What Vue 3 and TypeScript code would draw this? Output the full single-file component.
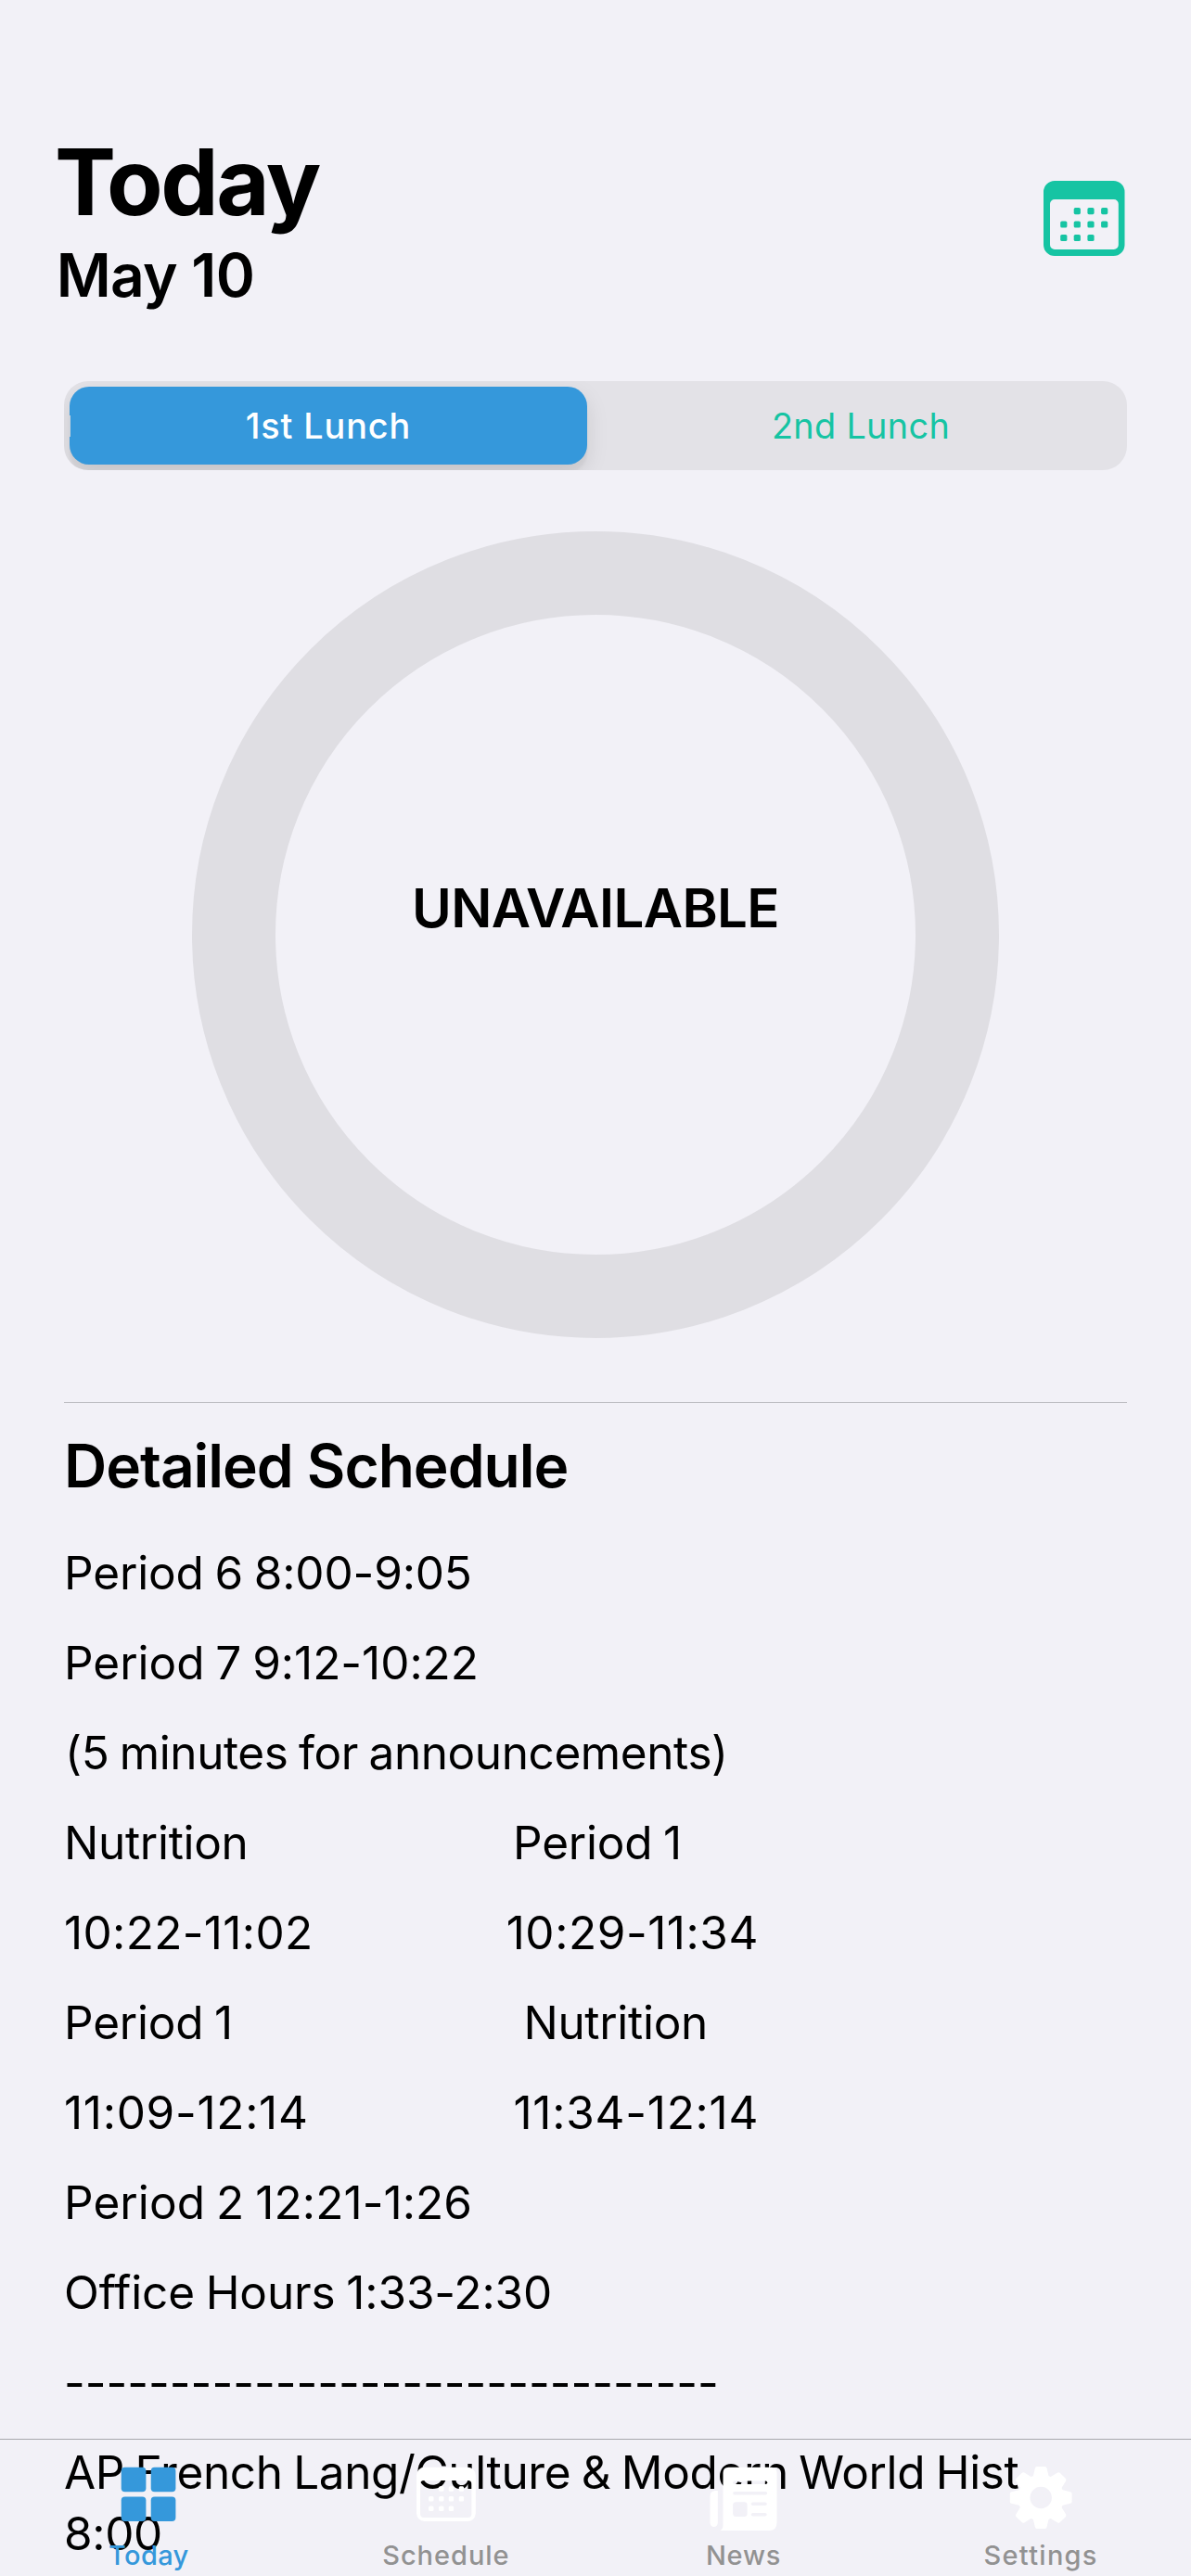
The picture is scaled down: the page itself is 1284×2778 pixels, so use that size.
<script setup lang="ts">
import { ref } from 'vue'

interface Cell {
  text: string
  spacing: number
  indent?: number
}

const lunches = ['1st Lunch', '2nd Lunch']
const selected = ref(0)

const schedule: Cell[][] = [
  [{ text: 'Period 6 8:00-9:05', spacing: -0.15 }],
  [{ text: 'Period 7 9:12-10:22', spacing: -0.03 }],
  [{ text: '(5 minutes for announcements)', spacing: -0.41, indent: 1 }],
  [{ text: 'Nutrition', spacing: -0.3 }, { text: 'Period 1', spacing: -0.22, indent: 8 }],
  [{ text: '10:22-11:02', spacing: 0.35 }, { text: '10:29-11:34', spacing: 0.54, indent: 0.7 }],
  [{ text: 'Period 1', spacing: -0.22 }, { text: 'Nutrition', spacing: -0.3, indent: 19.4 }],
  [{ text: '11:09-12:14', spacing: 0.7 }, { text: '11:34-12:14', spacing: 0.74, indent: 8.5 }],
  [{ text: 'Period 2 12:21-1:26', spacing: 0.08 }],
  [{ text: 'Office Hours 1:33-2:30', spacing: -0.13 }],
  [{ text: '-'.repeat(31), spacing: 0 }],
  [{ text: 'AP French Lang/Culture & Modern World Hist 8:00', spacing: -0.37 }],
]

const teeth = [0, 45, 90, 135, 180, 225, 270, 315]
const headerDots = [
  [36.3, 32.7], [51, 32.7], [65.7, 32.7],
  [21.8, 47], [36.3, 47], [51, 47], [65.7, 47],
  [21.8, 61.5], [36.3, 61.5], [51, 61.5],
]
const tabDots = [
  [34.8, 25], [45.4, 25], [56.4, 25],
  [23.8, 35.7], [34.8, 35.7], [45.4, 35.7], [56.4, 35.7],
  [23.8, 46.3], [34.8, 46.3], [45.4, 46.3],
]
</script>

<template>
  <div class="screen">
    <header class="header">
      <div>
        <h1 class="title">Today</h1>
        <p class="date">May 10</p>
      </div>
      <svg class="calendar" width="88" height="82" viewBox="0 0 88 82">
        <path
          fill-rule="evenodd"
          d="M12 0H75.5A12 12 0 0 1 87.5 12V69A12 12 0 0 1 75.5 81H12A12 12 0 0 1 0 69V12A12 12 0 0 1 12 0ZM12 20A5 5 0 0 0 7 25V69A5 5 0 0 0 12 74H75.8A5 5 0 0 0 80.8 69V25A5 5 0 0 0 75.8 20Z"
        />
        <rect v-for="([x, y], i) in headerDots" :key="i" :x="x - 3.6" :y="y - 3.6" width="7.2" height="7.2" rx="1.7" />
      </svg>
    </header>

    <div class="segmented">
      <button
        v-for="(name, i) in lunches"
        :key="name"
        class="segment"
        :class="{ active: selected === i }"
        @click="selected = i"
      >
        {{ name }}
      </button>
    </div>

    <div class="ring"><span>UNAVAILABLE</span></div>

    <section class="details">
      <h2>Detailed Schedule</h2>
      <div v-for="(row, r) in schedule" :key="r" class="row">
        <span
          v-for="(cell, c) in row"
          :key="c"
          :class="{ half: row.length > 1 }"
          :style="{ letterSpacing: cell.spacing + 'px', paddingLeft: (cell.indent ?? 0) + 'px' }"
        >{{ cell.text }}</span>
      </div>
    </section>

    <nav class="tabs">
      <a class="tab current">
        <svg viewBox="0 0 80 72">
          <rect x="10.7" y="1.8" width="26.7" height="26.4" rx="4" />
          <rect x="42.7" y="1.8" width="26.7" height="26.4" rx="4" />
          <rect x="10.7" y="33.4" width="26.7" height="26.6" rx="4" />
          <rect x="42.7" y="33.4" width="26.7" height="26.6" rx="4" />
        </svg>
        <span class="label today">Today</span>
      </a>
      <a class="tab">
        <svg viewBox="0 0 80 72">
          <path
            fill-rule="evenodd"
            d="M16.6 1.7H63.3A8.5 8.5 0 0 1 71.8 10.2V51.5A8.5 8.5 0 0 1 63.3 60H16.6A8.5 8.5 0 0 1 8.1 51.5V10.2A8.5 8.5 0 0 1 16.6 1.7ZM16.1 16A4 4 0 0 0 12.1 20V52A4 4 0 0 0 16.1 56H63.4A4 4 0 0 0 67.4 52V20A4 4 0 0 0 63.4 16Z"
          />
          <rect v-for="([x, y], i) in tabDots" :key="i" :x="x - 2.7" :y="y - 2.7" width="5.4" height="5.4" rx="1.5" />
        </svg>
        <span class="label">Schedule</span>
      </a>
      <a class="tab">
        <svg viewBox="0 0 80 72">
          <mask id="news-cut">
            <rect width="80" height="72" fill="#fff" />
            <g fill="#000">
              <rect x="28.2" y="16.6" width="37" height="3.4" rx="1.7" />
              <rect x="28.2" y="28" width="37" height="3.4" rx="1.7" />
              <rect x="28.2" y="39.3" width="15.4" height="15.7" rx="3.2" />
              <rect x="47.8" y="39.5" width="16.9" height="3.4" rx="1.7" />
              <rect x="47.8" y="51" width="16.9" height="3.4" rx="1.7" />
            </g>
          </mask>
          <path
            mask="url(#news-cut)"
            d="M23.5 1.7H69.5Q75.5 1.7 75.5 7.7V61.5Q75.5 70 67 70H14.5Q17.5 68.5 17.5 63.5V7.7Q17.5 1.7 23.5 1.7Z"
          />
          <path d="M11.8 27V61.8A4.15 4.15 0 0 1 3.5 61.8V33Q3.5 27 9.5 27Z" />
        </svg>
        <span class="label news">News</span>
      </a>
      <a class="tab">
        <svg viewBox="0 0 80 72">
          <mask id="gear-cut">
            <rect width="80" height="72" fill="#fff" />
            <circle cx="40.2" cy="34.5" r="11.7" fill="#000" />
          </mask>
          <g mask="url(#gear-cut)">
            <circle cx="40.2" cy="34.5" r="24.8" />
            <path
              v-for="angle in teeth"
              :key="angle"
              d="M-6.6-21L-4.2-31.2H4.2L6.6-21Z"
              stroke-width="4.4"
              stroke-linejoin="round"
              :transform="`translate(40.2 34.5) rotate(${angle})`"
            />
          </g>
        </svg>
        <span class="label settings">Settings</span>
      </a>
    </nav>
  </div>
</template>

<style>
body {
  background: #f2f1f7;
}
</style>

<style scoped>
.screen {
  position: relative;
  box-sizing: border-box;
  width: 1284px;
  height: 2778px;
  padding: 136px 69px 0;
  overflow: hidden;
  background: #f2f1f7;
  color: #000;
  font-family: Inter, 'Liberation Sans', sans-serif;
}

h1,
h2,
p {
  margin: 0;
}

.header {
  display: flex;
  justify-content: space-between;
  height: 275px;
  margin: 0 2px 0 -10px;
}

.title {
  font-size: 99px;
  line-height: 120px;
  font-weight: 700;
  letter-spacing: -2.4px;
}

.date {
  padding-left: 1.7px;
  font-size: 64px;
  line-height: 81px;
  font-weight: 600;
  letter-spacing: -0.71px;
}

.calendar {
  margin-top: 59px;
  fill: #16c4a3;
}

.segmented {
  display: flex;
  justify-content: space-between;
  box-sizing: border-box;
  height: 96px;
  padding: 6px 2px 6px 6px;
  overflow: hidden;
  border-radius: 26px;
  background: #e3e2e7;
}

.segment {
  position: relative;
  width: 570px;
  padding: 0;
  border: 0;
  border-radius: 21px;
  background: none;
  color: #16c4a3;
  font: 400 37.8px/84px Inter, 'Liberation Sans', sans-serif;
  letter-spacing: 0.34px;
}

.segment.active {
  width: 558px;
  background: #3598db;
  box-shadow: 0 9px 24px rgba(0, 0, 0, 0.1), 0 9px 3px rgba(0, 0, 0, 0.04);
  color: #fff;
  font-weight: 500;
  letter-spacing: 0.89px;
}

.segment.active::before {
  position: absolute;
  top: 31px;
  left: 0;
  width: 1px;
  height: 23px;
  background: #c9d3de;
  content: '';
}

.ring {
  display: flex;
  align-items: center;
  justify-content: center;
  box-sizing: border-box;
  width: 870px;
  height: 870px;
  margin: 66px auto 69px;
  padding-bottom: 59px;
  border: 90px solid #dfdee3;
  border-radius: 50%;
  font-size: 58.2px;
  font-weight: 600;
  letter-spacing: -0.66px;
}

.details {
  border-top: 1px solid #bdbdc2;
}

.details h2 {
  margin: 29px 0 43px;
  font-size: 64px;
  line-height: 78px;
  font-weight: 600;
  letter-spacing: -1.03px;
}

.row {
  display: flex;
  margin-bottom: 31px;
  padding-right: 60px;
  font-size: 49.5px;
  line-height: 66px;
  word-spacing: -2px;
}

.half {
  flex: none;
  box-sizing: border-box;
  width: 476px;
  white-space: nowrap;
}

.tabs {
  position: absolute;
  right: 0;
  bottom: 0;
  left: 0;
  display: flex;
  box-sizing: border-box;
  height: 148px;
  padding: 28px 1.6px 0 0;
  border-top: 1px solid #a8a8ad;
}

.tab {
  display: flex;
  flex: 1;
  flex-direction: column;
  align-items: center;
  color: #929292;
  font-size: 29px;
  line-height: 36px;
  font-weight: 500;
}

.tab svg {
  flex: none;
  width: 80px;
  height: 72px;
  margin-bottom: 6.5px;
  fill: #fff;
  stroke: #fff;
  stroke-width: 0;
}

.label {
  letter-spacing: 0.97px;
}

.label.today {
  letter-spacing: 0.39px;
}

.label.news {
  letter-spacing: 0.76px;
}

.label.settings {
  letter-spacing: 1.28px;
}

.current {
  color: #3598db;
}

.tab.current svg {
  fill: #3598db;
}
</style>
